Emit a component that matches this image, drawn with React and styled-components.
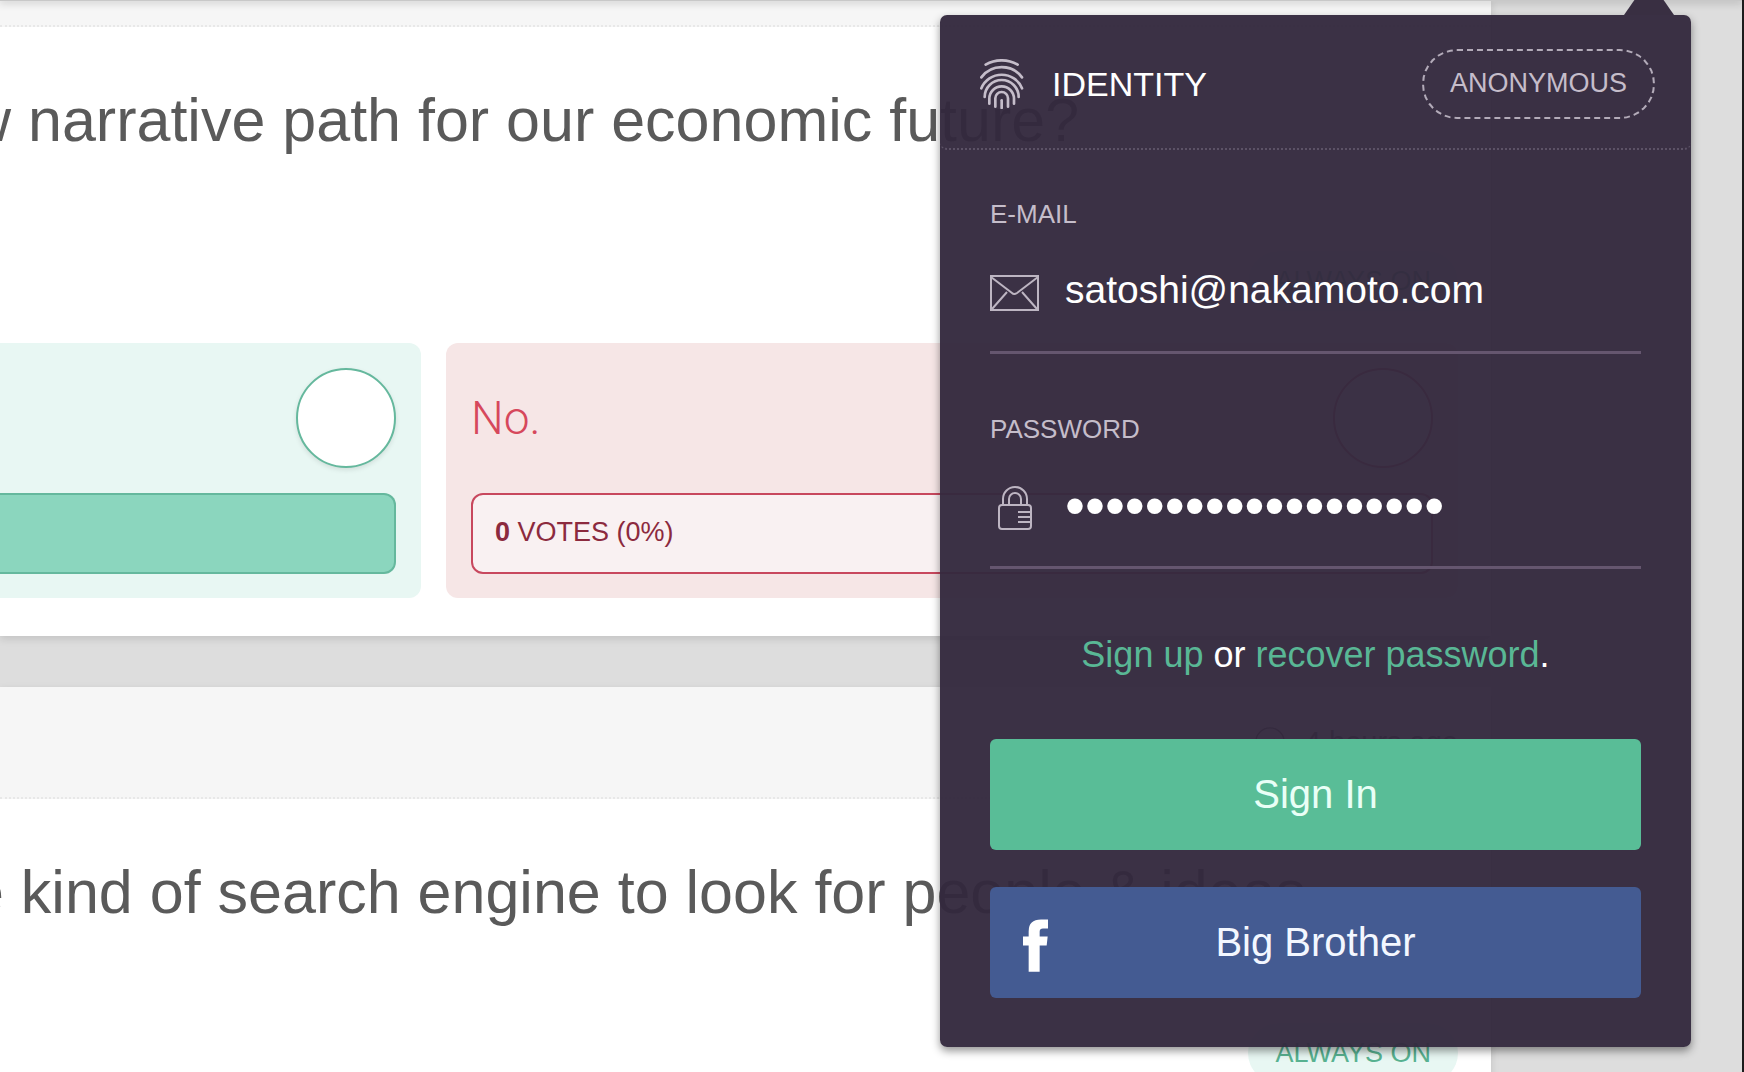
import React from "react";
import styled, { createGlobalStyle } from "styled-components";
import { CircleCheck } from "lucide-react";

const GlobalStyle = createGlobalStyle`
  *, *::before, *::after { box-sizing: border-box; }
  body {
    margin: 0;
    font-family: "Liberation Sans", Arial, Helvetica, sans-serif;
    color: #505050;
    background: #dddddd;
  }
`;

const Page = styled.div`
  position: relative;
  height: 100vh;
  overflow: hidden;
  border-right: 2px solid #1c1c1c;
`;

const TopBarEdge = styled.div`
  position: absolute;
  z-index: 1;
  top: 0;
  left: 0;
  right: 0;
  height: 1px;
  background: #c8c8c8;
  box-shadow: 0 0 9px 1px rgba(0, 0, 0, 0.32);
`;

const Feed = styled.main`
  display: flex;
  flex-direction: column;
  gap: 51px;
  padding-right: 251px;
`;

const Card = styled.article`
  background: #ffffff;
  box-shadow: 0 3px 8px rgba(0, 0, 0, 0.12);
`;

const CardHeader = styled.header`
  display: flex;
  align-items: center;
  justify-content: flex-end;
  gap: 18px;
  height: ${(p) => (p.$tucked ? 27 : 112)}px;
  padding: 0 33px;
  font-size: 29px;
  background: #f6f6f6;
  border-bottom: 2px dotted #e8e8e8;
`;

const CardBody = styled.div`
  display: flex;
  flex-direction: column;
  padding: 57px 33px 38px 0;
`;

const Question = styled.h2`
  margin: 0;
  font-size: 61px;
  font-weight: 400;
  line-height: 72px;
  white-space: nowrap;
  color: #5a5a5a;
  text-indent: -${(p) => p.$cut}px;
`;

const Status = styled.span`
  align-self: flex-end;
  margin-top: 95px;
  padding: 0 27px;
  border-radius: 30px;
  font-size: 27px;
  line-height: 60px;
  color: #58b291;
  background: #e8f7f3;
`;

const Options = styled.div`
  display: grid;
  grid-template-columns: 421px 1fr;
  gap: 25px;
  margin-top: 32px;
`;

const tones = {
  yes: { back: "#e8f7f3", line: "#65b89d", fill: "#8bd6be", text: "#3f9f7f", lead: "#3f9f7f" },
  no: { back: "#f6e6e6", line: "#c8485e", fill: "#f9f1f2", text: "#8c2a3e", lead: "#d6485c" },
};

const Option = styled.section`
  display: flex;
  flex-direction: column;
  gap: 25px;
  padding: 25px 25px 24px ${(p) => (p.$tone === "yes" ? 0 : 25)}px;
  border-radius: ${(p) => (p.$tone === "yes" ? "0 12px 12px 0" : "12px")};
  background: ${(p) => tones[p.$tone].back};
`;

const OptionTop = styled.div`
  display: flex;
  align-items: center;
  justify-content: flex-end;
`;

const OptionLabel = styled.label`
  flex: 1;
  font-family: Roboto, "Liberation Sans", sans-serif;
  font-size: 46px;
  font-weight: 300;
  color: ${(p) => tones[p.$tone].lead};
`;

const Choice = styled.input`
  appearance: none;
  width: 100px;
  height: 100px;
  margin: 0;
  border: 2px solid ${(p) => tones[p.$tone].line};
  border-radius: 50%;
  background: #ffffff;
  box-shadow: 0 2px 5px rgba(0, 0, 0, 0.1);
`;

const Votes = styled.div`
  height: 81px;
  padding: 0 22px;
  border: 2px solid ${(p) => tones[p.$tone].line};
  border-left-width: ${(p) => (p.$tone === "yes" ? 0 : 2)}px;
  border-radius: ${(p) => (p.$tone === "yes" ? "0 12px 12px 0" : "12px")};
  font-size: 27px;
  line-height: 74px;
  color: ${(p) => tones[p.$tone].text};
  background: ${(p) => tones[p.$tone].fill};
`;

const Panel = styled.aside`
  position: absolute;
  z-index: 2;
  top: 15px;
  right: 51px;
  width: 751px;
  border-radius: 7px;
  color: #ffffff;
  background: rgba(51, 41, 61, 0.96);
  box-shadow: 0 4px 8px rgba(0, 0, 0, 0.42);
`;

const Pointer = styled.span`
  position: absolute;
  right: 17px;
  bottom: 100%;
  border: solid transparent;
  border-width: 0 25px 36px;
  border-bottom-color: #392f42;
`;

const PanelHeader = styled.header`
  display: flex;
  align-items: center;
  gap: 28px;
  padding: 34px 36px 29px 40px;
  border-bottom: 2px dotted #5c5266;
  border-radius: 7px;
`;

const PanelTitle = styled.h1`
  flex: 1;
  margin: 0;
  font-size: 34px;
  font-weight: 400;
  line-height: 40px;
`;

const AnonymousButton = styled.button`
  height: 70px;
  padding: 0 26px 2px;
  border: 2px dashed #b3abb9;
  border-radius: 35px;
  font: inherit;
  font-size: 27px;
  color: #c5bdca;
  background: transparent;
`;

const Form = styled.form`
  display: flex;
  flex-direction: column;
  padding: 49px 50px;
`;

const Field = styled.div`
  display: flex;
  flex-direction: column;
  & + & { margin-top: 60px; }
`;

const FieldLabel = styled.label`
  font-size: 26px;
  line-height: 30px;
  color: #c5bdca;
`;

const FieldRow = styled.div`
  display: flex;
  align-items: center;
  gap: 26px;
  height: 125px;
  border-bottom: 3px solid #65566f;
`;

const FieldIcon = styled.span`
  display: flex;
  justify-content: center;
  width: 49px;
  padding-top: 6px;
`;

const TextInput = styled.input`
  flex: 1;
  min-width: 0;
  height: 80px;
  padding: 0;
  border: 0;
  outline: 0;
  font-family: inherit;
  font-size: ${(p) => (p.type === "password" ? 57 : 39)}px;
  color: #ffffff;
  background: transparent;
`;

const Help = styled.p`
  margin: 66px 0 64px;
  font-size: 36px;
  line-height: 40px;
  text-align: center;
`;

const HelpLink = styled.a`
  color: #59b795;
  text-decoration: none;
`;

const Actions = styled.div`
  display: flex;
  flex-direction: column;
  gap: 37px;
`;

const ActionButton = styled.button`
  display: grid;
  grid-template-columns: 1fr auto 1fr;
  align-items: center;
  height: 111px;
  padding: 0 33px;
  border: 0;
  border-radius: 6px;
  font: inherit;
  font-size: 40px;
  color: ${(p) => (p.$brand ? "#f3f7ff" : "#e9fff6")};
  background: ${(p) => (p.$brand ? "#445b92" : "#59bd97")};
`;

const ActionText = styled.span`
  grid-column: 2;
`;

const Fingerprint = () => (
  <svg width="44" height="50" viewBox="0 0 132 150" fill="none" stroke="#c5bdca" strokeWidth="8" strokeLinecap="round" aria-hidden="true">
    <path d="M65 124V147" />
    <path d="M46 143V118a19 19 0 0 1 38 0v25" />
    <path d="M28 134v-15a37 37 0 0 1 74 0v15" />
    <path d="M14 114a51 51 0 0 1 102 0" />
    <path d="M4 88A66 66 0 0 1 126 88" />
    <path d="M4 55A76 76 0 0 1 126 55" />
    <path d="M17 17A95 95 0 0 1 113 17" />
  </svg>
);

const Envelope = () => (
  <svg width="49" height="36" viewBox="0 0 49 36" fill="none" stroke="#bdb5c2" strokeWidth="2" aria-hidden="true">
    <rect x="1" y="1" width="47" height="34" />
    <path d="M1 2L22 18Q24 20 27 18L48 2M17 17L2 34M32 17L47 34" />
  </svg>
);

const Padlock = () => (
  <svg width="34" height="44" viewBox="0 0 34 44" fill="none" stroke="#bdb5c2" strokeWidth="2" aria-hidden="true">
    <rect x="1" y="19" width="32" height="24" rx="3" />
    <path d="M5 19V13a12 12 0 0 1 24 0v6M11 19v-6a6 6 0 0 1 12 0v6M20 26h13M20 31h13M20 36h13" />
  </svg>
);

const FacebookMark = () => (
  <svg width="25" height="59" viewBox="0 -18 75 176" fill="#ffffff" aria-hidden="true">
    <path d="M75 1V28H60Q50 28 50 38V52H74L71 79H50V158H17V79H0V52H17V36Q17 1 54 1Z" />
  </svg>
);

export default function App() {
  return (
    <>
      <GlobalStyle />
      <Page>
        <TopBarEdge />
        <Feed>
          <Card>
            <CardHeader $tucked />
            <CardBody>
              <Question $cut={33}>w narrative path for our economic future?</Question>
              <Status>ALWAYS ON</Status>
              <Options>
                <Option $tone="yes">
                  <OptionTop>
                    <Choice $tone="yes" type="radio" name="vote" aria-label="Yes" />
                  </OptionTop>
                  <Votes $tone="yes" />
                </Option>
                <Option $tone="no">
                  <OptionTop>
                    <OptionLabel $tone="no" htmlFor="vote-no">No.</OptionLabel>
                    <Choice $tone="no" type="radio" name="vote" id="vote-no" />
                  </OptionTop>
                  <Votes $tone="no"><b>0</b> VOTES (0%)</Votes>
                </Option>
              </Options>
            </CardBody>
          </Card>
          <Card>
            <CardHeader>
              <CircleCheck size={34} strokeWidth={1} aria-hidden="true" />
              <span>4 hours ago</span>
            </CardHeader>
            <CardBody>
              <Question $cut={30}>e kind of search engine to look for people &amp; ideas</Question>
              <Status>ALWAYS ON</Status>
            </CardBody>
          </Card>
        </Feed>

        <Panel>
          <Pointer />
          <PanelHeader>
            <Fingerprint />
            <PanelTitle>IDENTITY</PanelTitle>
            <AnonymousButton type="button">ANONYMOUS</AnonymousButton>
          </PanelHeader>
          <Form onSubmit={(e) => e.preventDefault()}>
            <Field>
              <FieldLabel htmlFor="email">E-MAIL</FieldLabel>
              <FieldRow>
                <FieldIcon><Envelope /></FieldIcon>
                <TextInput id="email" type="email" defaultValue="satoshi@nakamoto.com" />
              </FieldRow>
            </Field>
            <Field>
              <FieldLabel htmlFor="password">PASSWORD</FieldLabel>
              <FieldRow>
                <FieldIcon><Padlock /></FieldIcon>
                <TextInput id="password" type="password" defaultValue="genesis-block-03012" />
              </FieldRow>
            </Field>
            <Help>
              <HelpLink href="#signup">Sign up</HelpLink> or <HelpLink href="#recover">recover password</HelpLink>.
            </Help>
            <Actions>
              <ActionButton type="submit"><ActionText>Sign In</ActionText></ActionButton>
              <ActionButton type="button" $brand>
                <FacebookMark />
                <ActionText>Big Brother</ActionText>
              </ActionButton>
            </Actions>
          </Form>
        </Panel>
      </Page>
    </>
  );
}
